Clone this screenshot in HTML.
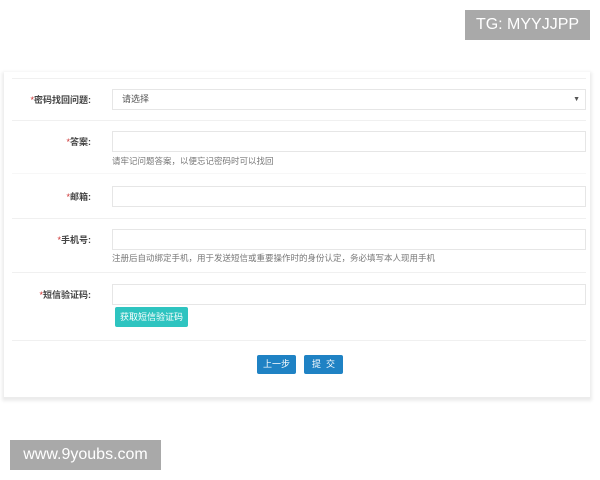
<!DOCTYPE html><html><head><meta charset="utf-8"><style>
body{margin:0;width:600px;height:480px;background:#fff;position:relative;font-family:"Liberation Sans","Noto Sans CJK SC",sans-serif;overflow:hidden}
.card{position:absolute;left:4px;top:72px;width:586px;height:325px;background:#fff;box-shadow:0 2px 3px 2px #ececec}
.hr{position:absolute;left:12px;width:574px;border-top:1px solid #f0f0f0}
.lab{position:absolute;width:91px;text-align:right;font-size:9px;color:#444;left:0;font-weight:bold}
.lab b{color:#c33;font-weight:normal}
.in{position:absolute;left:112px;width:472px;height:19px;border:1px solid #e6e6e6;background:#fff;font-size:9px;color:#555;line-height:19px;box-sizing:content-box}
.hint{position:absolute;left:112px;font-size:8.5px;color:#777}
.btn{position:absolute;color:#fff;font-size:9px;text-align:center;border-radius:2px}
.wm{position:absolute;background:#a9a9a9;color:#fff;font-size:16px;line-height:30px;text-align:center}
</style></head><body>
<div class="card"></div>
<div class="hr" style="top:78px"></div>
<div class="lab" style="top:93px"><b>*</b>密码找回问题:</div>
<div class="in" style="top:89px"><span style="margin-left:9px">请选择</span><span style="position:absolute;right:5px;font-size:7px">▼</span></div>
<div class="hr" style="top:120px"></div>
<div class="lab" style="top:135px"><b>*</b>答案:</div>
<div class="in" style="top:131px"></div>
<div class="hint" style="top:155px">请牢记问题答案，以便忘记密码时可以找回</div>
<div class="hr" style="top:173px;border-color:#f7f7f7"></div>
<div class="lab" style="top:190px"><b>*</b>邮箱:</div>
<div class="in" style="top:186px"></div>
<div class="hr" style="top:218px"></div>
<div class="lab" style="top:233px"><b>*</b>手机号:</div>
<div class="in" style="top:229px"></div>
<div class="hint" style="top:252px">注册后自动绑定手机，用于发送短信或重要操作时的身份认定，务必填写本人现用手机</div>
<div class="hr" style="top:272px"></div>
<div class="lab" style="top:288px"><b>*</b>短信验证码:</div>
<div class="in" style="top:284px"></div>
<div class="btn" style="left:115px;top:307px;width:73px;height:20px;line-height:20px;background:#2ec4c0">获取短信验证码</div>
<div class="hr" style="top:340px"></div>
<div class="btn" style="left:257px;top:355px;width:39px;height:19px;line-height:19px;background:#1f82c4">上一步</div>
<div class="btn" style="left:304px;top:355px;width:39px;height:19px;line-height:19px;background:#1f82c4">提&nbsp;&nbsp;交</div>
<div class="wm" style="left:465px;top:10px;width:125px">TG: MYYJJPP</div>
<div class="wm" style="left:10px;top:440px;width:151px">www.9youbs.com</div>
</body></html>
